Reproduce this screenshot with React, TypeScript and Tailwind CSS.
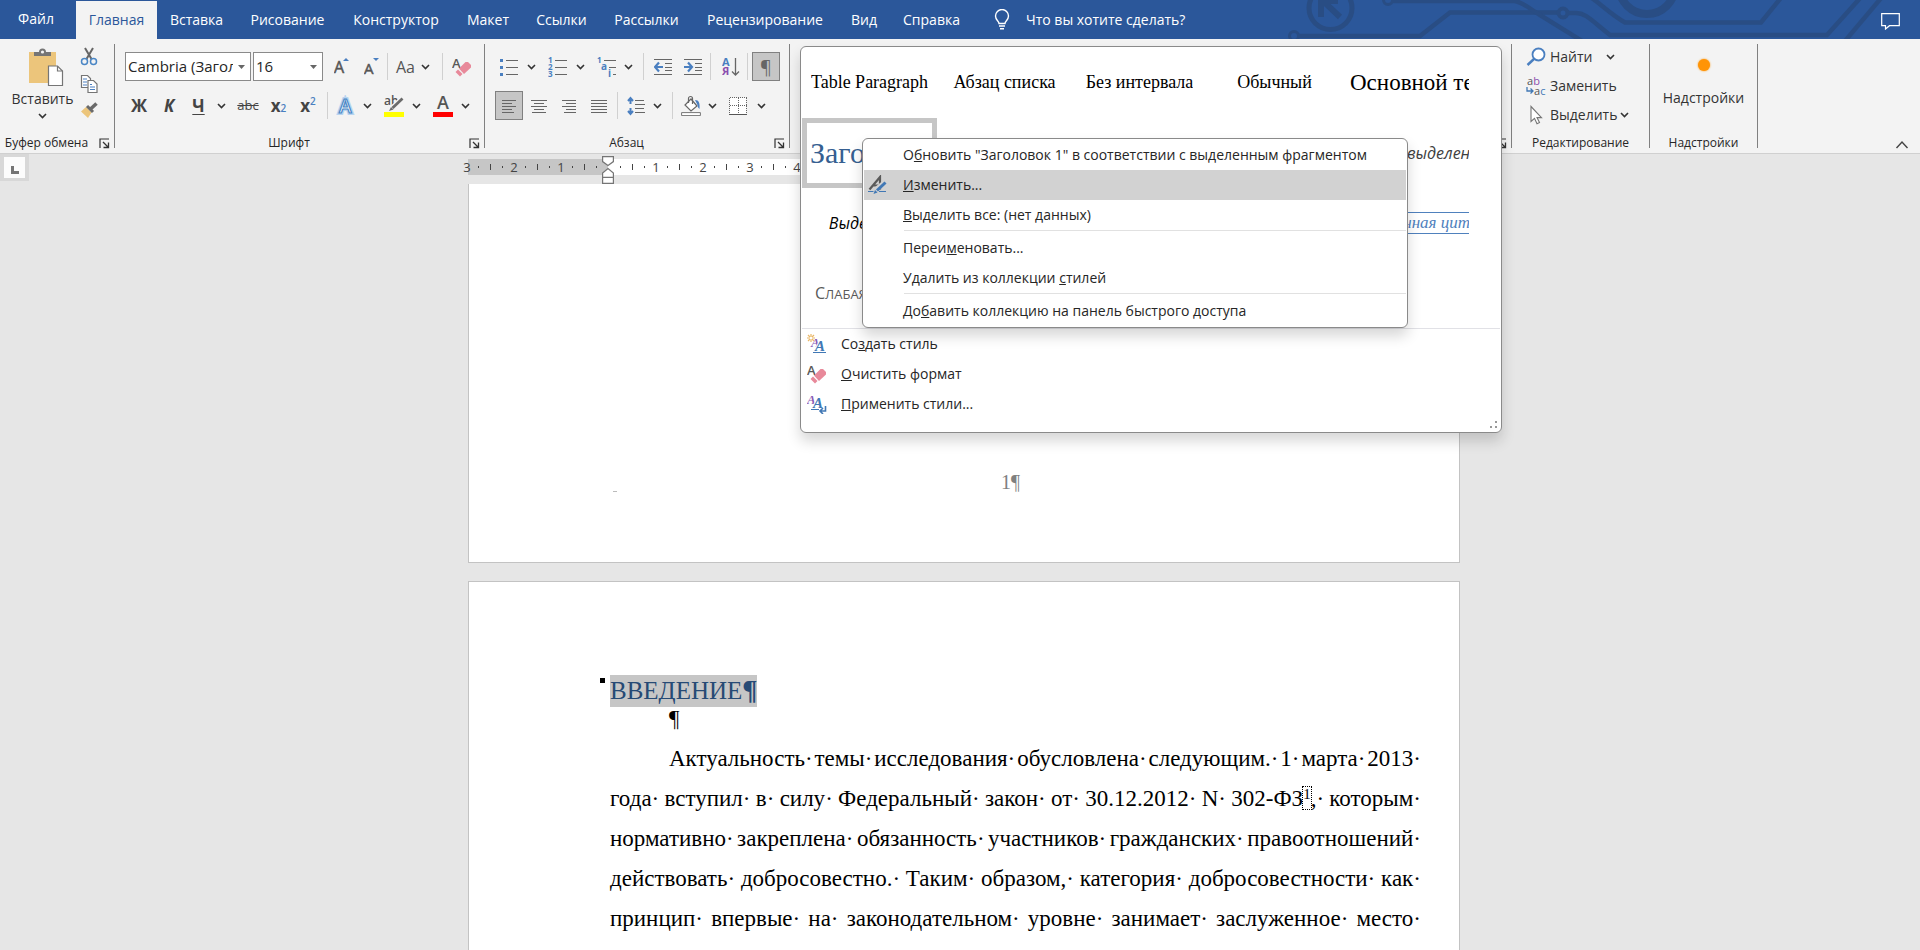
import React, { ReactNode } from "react";

const UI = "font-['Open_Sans','Noto_Sans',sans-serif]";

function Svg({ w, h, children, className = "" }: { w: number; h: number; children: ReactNode; className?: string }) {
  return (
    <svg width={w} height={h} viewBox={`0 0 ${w} ${h}`} fill="none" aria-hidden="true" className={`shrink-0 ${className}`}>
      {children}
    </svg>
  );
}

const Chevron = () => (
  <Svg w={9} h={6}>
    <path d="M1 1l3.5 3.5L8 1" stroke="#333" strokeWidth="1.6" />
  </Svg>
);

const Launcher = () => (
  <Svg w={11} h={11}>
    <path d="M1 10V1h9" stroke="#333" strokeWidth="1.2" />
    <path d="M4 4l5 5M9.5 4.5v5h-5" stroke="#333" strokeWidth="1.3" />
  </Svg>
);

function Tool({ label, width, className = "", children }: { label: string; width: string; className?: string; children: ReactNode }) {
  return (
    <button type="button" aria-label={label} className={`flex h-[29px] shrink-0 items-center justify-center ${width} ${className}`}>
      {children}
    </button>
  );
}

const Divider = ({ className = "" }: { className?: string }) => <span className={`h-[27px] w-px shrink-0 bg-[#d0d0d0] ${className}`} />;

function Group({ label, width, launcher, children }: { label: string; width: string; launcher?: boolean; children: ReactNode }) {
  return (
    <section aria-label={label} className={`relative flex shrink-0 ${width}`}>
      <div className="flex min-w-0 grow flex-col pt-[13px]">
        <div className="h-[83px]">{children}</div>
        <div className={`flex h-4 items-center ${launcher ? "pr-1" : "px-1"}`}>
          <span className={`grow whitespace-nowrap text-center text-xs leading-4 text-[#262626] ${launcher ? "pr-1.5" : ""}`}>{label}</span>
          {launcher && (
            <button type="button" aria-label={`${label}: параметры`}>
              <Launcher />
            </button>
          )}
        </div>
      </div>
      <span className="my-[5px] w-px bg-[#808080]" />
    </section>
  );
}

const tabs = [
  ["Вставка", "w-[79px]"],
  ["Рисование", "w-[103px]"],
  ["Конструктор", "w-[114px]"],
  ["Макет", "w-[70px]"],
  ["Ссылки", "w-[77px]"],
  ["Рассылки", "w-[93px]"],
  ["Рецензирование", "w-[144px]"],
  ["Вид", "w-[54px]"],
  ["Справка", "w-[81px]"],
];

function Header() {
  return (
    <header className="relative flex h-[39px] shrink-0 items-stretch overflow-hidden bg-[#2b579a] text-sm text-white">
      <svg width="640" height="39" viewBox="1280 0 640 39" fill="none" stroke="#294d84" strokeWidth="4.5" className="absolute right-0 top-0" aria-hidden="true">
        <circle cx="1330.500" cy="8" r="21.500" strokeWidth="5" />
        <path d="M1321 17V-2M1321 -1l19 18M1318 1h20" strokeWidth="6" />
        <circle cx="1294" cy="36" r="4.500" strokeWidth="3" />
        <path d="M1298 36h122l30-23.500h108" />
        <circle cx="1563" cy="13" r="4.500" strokeWidth="4" />
        <path d="M1568 13h8c10 0 16 8 34 22h217l35-39" />
        <circle cx="1388" cy="0" r="4.500" strokeWidth="3" />
        <path d="M1392 1h123c9 2 15 8 25 14l42 26" />
        <path d="M1590-3c10 6 20 17 35 25.500h136l21-26" />
        <path d="M1845 41l37-44" />
        <circle cx="1647" cy="-14" r="28" strokeWidth="8" />
      </svg>
      <nav className="relative flex pt-px">
        <button type="button" className="w-[76px] pr-1 pb-0.5">Файл</button>
        <button type="button" className="w-[81px] bg-[#f3f3f3] text-[#2b579a]">Главная</button>
        {tabs.map(([t, w]) => (
          <button key={t} type="button" className={w}>
            {t}
          </button>
        ))}
      </nav>
      <label className="relative ml-[22px] flex items-center gap-4">
        <Svg w={16} h={21}>
          <path d="M5 14.500C5 12 1.500 11 1.500 7a6.500 6.500 0 0113 0c0 4-3.500 5-3.500 7.500z M5 17h6M6 19.800h4" stroke="#fff" strokeWidth="1.400" />
        </Svg>
        <input aria-label="Помощник" placeholder="Что вы хотите сделать?" className="w-[190px] bg-transparent outline-none placeholder:text-white" />
      </label>
      <button type="button" aria-label="Примечания" className="relative ml-auto mr-5 mt-[2px]">
        <Svg w={19} h={18}>
          <path d="M.7 1.700h17.600v12H8.500L4.500 17v-3.300H.7z" stroke="#fff" strokeWidth="1.200" />
        </Svg>
      </button>
    </header>
  );
}

function Eraser() {
  return (
    <Svg w={20} h={20}>
      <text x="0" y="11" fontSize="13" fontWeight="600" fill="#595959" fontFamily="Open Sans">A</text>
      <path d="M3.500 15l2.500-2.500 4.500 4.500L8 19.500z" fill="#e8899a" />
      <path d="M7 11.500L13.500 5h2.500l3 3v2.500L12 17z" fill="#e8899a" />
    </Svg>
  );
}

function Clipboard() {
  return (
    <div className="flex pl-2">
      <button type="button" className="flex w-[69px] flex-col items-center text-sm leading-5 text-[#333]">
        <Svg w={36} h={38} className="-mt-1 ml-1.5">
          <path d="M1 4h27v31H1z" fill="#ecc57b" />
          <path d="M6 8V4h5a3 3 0 017 0h5v4z" fill="#757575" />
          <circle cx="14.500" cy="4" r="1.600" fill="#f3f3f3" />
          <path d="M20.500 18h9l5 5v14.500h-14z" fill="#fff" stroke="#757575" strokeWidth="1.200" />
          <path d="M29.500 18v5h5" stroke="#757575" strokeWidth="1.200" />
        </Svg>
        <span className="mt-[3px]">Вставить</span>
        <span className="mt-1">
          <Chevron />
        </span>
      </button>
      <div className="ml-[3px] -mt-[5px] flex flex-col gap-2">
        <button type="button" aria-label="Вырезать">
          <Svg w={18} h={19}>
            <path d="M5 1l6.500 11M13 1L6.500 12" stroke="#666" strokeWidth="2" />
            <circle cx="4.500" cy="14.500" r="3" stroke="#4a86c5" strokeWidth="1.500" />
            <circle cx="13.500" cy="14.500" r="3" stroke="#4a86c5" strokeWidth="1.500" />
          </Svg>
        </button>
        <button type="button" aria-label="Копировать">
          <Svg w={18} h={19}>
            <path d="M1.500 1.500h6l3 3v9h-9z" fill="#fff" stroke="#757575" strokeWidth="1.200" />
            <path d="M3 5h4M3 8h4M3 11h4" stroke="#4a7fc0" />
            <path d="M8 6.500h5.500l3.500 3.500v8.500H8z" fill="#fff" stroke="#757575" strokeWidth="1.200" />
            <path d="M10 10.500h2M10 13h5M10 15.500h5" stroke="#4a7fc0" />
          </Svg>
        </button>
        <button type="button" aria-label="Формат по образцу">
          <Svg w={18} h={18}>
            <path d="M6 6l5.500 5.500L8 17 1 10.500z" fill="#ecc57b" />
            <path d="M7 5l6 6" stroke="#6a6a6a" strokeWidth="3" />
            <path d="M10.500 8L16.500 2.500" stroke="#6a6a6a" strokeWidth="3.500" />
          </Svg>
        </button>
      </div>
    </div>
  );
}

function Combo({ label, value, width }: { label: string; value: string; width: string }) {
  return (
    <div className={`flex h-[29px] items-center border border-[#8a8a8a] bg-white pl-0.5 ${width}`}>
      <input aria-label={label} defaultValue={value} className="min-w-0 grow bg-transparent text-[15px] text-[#262626] outline-none" />
      <button type="button" aria-label={`${label}: список`} className="flex w-[17px] shrink-0 items-center justify-center">
        <Svg w={7} h={4}>
          <path d="M0 0h7L3.500 4z" fill="#666" />
        </Svg>
      </button>
    </div>
  );
}

function FontTools() {
  return (
    <div className="flex flex-col gap-[10px] pl-2">
      <div className="flex items-center pl-0.5">
        <Combo label="Шрифт" value="Cambria (Заголовки)" width="w-[126px]" />
        <Combo label="Размер шрифта" value="16" width="ml-0.5 w-[70px]" />
        <Tool label="Увеличить размер" width="ml-1 w-[30px]">
          <Svg w={16} h={22}>
            <text x="0" y="17" fontSize="16" fill="#555" stroke="#555" strokeWidth=".5" fontFamily="Open Sans">A</text>
            <path d="M9 5l3-3 3 3z" fill="#4a7fc0" />
          </Svg>
        </Tool>
        <Tool label="Уменьшить размер" width="w-[29px]">
          <Svg w={16} h={22}>
            <text x="0" y="18" fontSize="15" fill="#555" stroke="#555" strokeWidth=".5" fontFamily="Open Sans">A</text>
            <path d="M9 2l3 3 3-3z" fill="#4a7fc0" />
          </Svg>
        </Tool>
        <Divider className="ml-px" />
        <Tool label="Регистр" width="w-[50px]" className="gap-1.5 text-base text-[#555]">
          Aa
          <Chevron />
        </Tool>
        <Divider className="ml-1" />
        <Tool label="Очистить формат" width="ml-1 w-[30px]">
          <Eraser />
        </Tool>
      </div>
      <div className="flex items-center text-[17px] font-bold text-[#444]">
        <Tool label="Полужирный" width="w-8">Ж</Tool>
        <Tool label="Курсив" width="w-7" className="italic">К</Tool>
        <Tool label="Подчеркнутый" width="w-[31px]" className="underline underline-offset-2">Ч</Tool>
        <Tool label="Вид подчеркивания" width="w-[14px]">
          <Chevron />
        </Tool>
        <Tool label="Зачеркнутый" width="ml-1 w-8" className="text-[13px] font-normal line-through">abc</Tool>
        <Tool label="Подстрочный" width="w-[29px]">
          <span>x</span>
          <sub className="text-[10px] font-semibold text-[#4a7fc0]">2</sub>
        </Tool>
        <Tool label="Надстрочный" width="w-[30px]">
          <span>x</span>
          <sup className="text-[10px] font-semibold text-[#4a7fc0]">2</sup>
        </Tool>
        <Divider className="ml-1" />
        <Tool label="Эффекты текста" width="ml-1 w-7">
          <Svg w={20} h={22}>
            <text x="3" y="18" fontSize="19" fontWeight="600" fill="#fff" stroke="#b8d4f0" strokeWidth="4" fontFamily="Open Sans">A</text>
            <text x="3" y="18" fontSize="19" fontWeight="600" fill="#fff" stroke="#4a86c5" strokeWidth="1.200" fontFamily="Open Sans">A</text>
          </Svg>
        </Tool>
        <Tool label="Варианты эффектов" width="w-[14px]">
          <Chevron />
        </Tool>
        <Tool label="Цвет выделения" width="ml-[6px] w-7">
          <Svg w={20} h={22}>
            <text x="0" y="10" fontSize="12" fontWeight="600" fill="#555" fontFamily="Open Sans">ab</text>
            <path d="M8 13L18 3.500" stroke="#f3f3f3" strokeWidth="5" />
            <path d="M8.500 13L18.500 3.500" stroke="#6a6a6a" strokeWidth="2.800" />
            <path d="M5 16l2-4 2.500 2.500z" fill="#6a6a6a" />
            <path d="M0 17h20v5H0z" fill="#ff0" />
          </Svg>
        </Tool>
        <Tool label="Варианты выделения" width="w-[16px]">
          <Chevron />
        </Tool>
        <Tool label="Цвет текста" width="ml-[5px] w-7">
          <Svg w={20} h={22}>
            <text x="4" y="14" fontSize="18" fontWeight="600" fill="#555" fontFamily="Open Sans">A</text>
            <path d="M0 17h20v5H0z" fill="#f00" />
          </Svg>
        </Tool>
        <Tool label="Варианты цвета" width="w-[16px]">
          <Chevron />
        </Tool>
      </div>
    </div>
  );
}

function Lines({ d, w = 18 }: { d: string; w?: number }) {
  return (
    <Svg w={w} h={14}>
      <path d={d} stroke="#666" strokeWidth="1" />
    </Svg>
  );
}

function ParagraphTools() {
  const num = { fontSize: 8, fontWeight: 700, fill: "#4a7fc0", fontFamily: "Open Sans" };
  return (
    <div className="flex flex-col gap-[10px] pl-[10px]">
      <div className="flex items-center">
        <Tool label="Маркеры" width="w-[27px]">
          <Svg w={18} h={18}>
            <path d="M6 2.500h12M6 9.500h12M6 16.500h12" stroke="#666" />
            <path d="M0 1h3v3H0zM0 8h3v3H0zM0 15h3v3H0z" fill="#4a7fc0" />
          </Svg>
        </Tool>
        <Tool label="Вид маркеров" width="w-[14px] ml-[2px]"><Chevron /></Tool>
        <Tool label="Нумерация" width="ml-[5px] w-[28px]">
          <Svg w={19} h={20}>
            <path d="M7 3.500h12M7 10.500h12M7 17.500h12" stroke="#666" />
            <text x="0" y="6" {...num}>1</text>
            <text x="0" y="13" {...num}>2</text>
            <text x="0" y="20" {...num}>3</text>
          </Svg>
        </Tool>
        <Tool label="Вид нумерации" width="ml-[2px] w-[14px]"><Chevron /></Tool>
        <Tool label="Многоуровневый список" width="ml-[5px] w-[29px]">
          <Svg w={20} h={20}>
            <path d="M7 3.500h12M12 10.500h7M16 17.500h3" stroke="#666" />
            <text x="0" y="6" {...num}>1</text>
            <text x="4" y="13" {...num} fontSize={10}>a</text>
            <text x="11" y="20" {...num} fontSize={10}>i</text>
          </Svg>
        </Tool>
        <Tool label="Вид списка" width="w-[14px]"><Chevron /></Tool>
        <Divider className="ml-2" />
        <Tool label="Уменьшить отступ" width="ml-1 w-[30px]">
          <Svg w={19} h={18}>
            <path d="M0 1.500h18M11 5.500h7M11 9.500h7M11 12.500h7M0 16.500h18" stroke="#666" />
            <path d="M9 9H2M5 4.500L1 9l4 4.500" stroke="#4a7fc0" strokeWidth="2.200" />
          </Svg>
        </Tool>
        <Tool label="Увеличить отступ" width="w-[30px]">
          <Svg w={19} h={18}>
            <path d="M0 1.500h18M11 5.500h7M11 9.500h7M11 12.500h7M0 16.500h18" stroke="#666" />
            <path d="M0 9h7M4 4.500L8 9l-4 4.500" stroke="#4a7fc0" strokeWidth="2.200" />
          </Svg>
        </Tool>
        <Divider className="ml-0.5" />
        <Tool label="Сортировка" width="ml-1 w-[31px]">
          <Svg w={18} h={22}>
            <text x="0" y="10" fontSize="11" fontWeight="700" fill="#4a7fc0" fontFamily="Open Sans">А</text>
            <text x="0" y="19" fontSize="11" fontWeight="700" fill="#8a4fae" fontFamily="Open Sans">Я</text>
            <path d="M13.500 2v17M10 15.500l3.500 3.500 3.500-3.500" stroke="#666" strokeWidth="1.300" />
          </Svg>
        </Tool>
        <Divider className="ml-px" />
        <Tool label="Отобразить все знаки" width="ml-1 w-[28px]" className="border border-[#808080] bg-[#c6c6c6] text-lg text-[#666]">
          ¶
        </Tool>
      </div>
      <div className="flex items-center">
        <Tool label="По левому краю" width="w-[28px]" className="border border-[#808080] bg-[#c6c6c6]">
          <Lines w={16} d="M1 1.500h14M1 4.500h10M1 7.500h14M1 10.500h10M1 13.500h12" />
        </Tool>
        <Tool label="По центру" width="ml-[2px] w-[28px]">
          <Lines w={16} d="M0 1.500h16M3 4.500h10M0 7.500h16M3 10.500h10M1 13.500h14" />
        </Tool>
        <Tool label="По правому краю" width="ml-[2px] w-[28px]">
          <Lines w={16} d="M1 1.500h14M5 4.500h10M1 7.500h14M5 10.500h10M3 13.500h12" />
        </Tool>
        <Tool label="По ширине" width="ml-[2px] w-[28px]">
          <Lines w={16} d="M0 1.500h16M0 4.500h16M0 7.500h16M0 10.500h16M0 13.500h16" />
        </Tool>
        <Divider className="ml-1" />
        <Tool label="Интервал" width="ml-1 w-[28px]">
          <Svg w={18} h={20}>
            <path d="M8 4.500h9M8 8.500h10M8 12.500h9M8 16.500h10" stroke="#666" />
            <path d="M3.500 8V2M1 5l2.500-3L6 5M3.500 12v6M1 15l2.500 3L6 15" stroke="#4a7fc0" strokeWidth="2" />
          </Svg>
        </Tool>
        <Tool label="Варианты интервала" width="w-[14px]"><Chevron /></Tool>
        <Divider className="ml-2" />
        <Tool label="Заливка" width="ml-[3px] w-[29px]">
          <Svg w={20} h={21}>
            <path d="M10 4l6 7-6 5-6-6z" fill="#fff" stroke="#666" strokeWidth="1.200" />
            <path d="M7.500 8V3.500a2 2 0 014 0V9" stroke="#666" strokeWidth="1.200" />
            <path d="M14 5c4 0 5 3 4.500 9-1-1-2-2-2-4z" fill="#4a7fc0" />
            <path d="M.6 17.600h18.800v3H.6z" fill="#fff" stroke="#757575" />
          </Svg>
        </Tool>
        <Tool label="Варианты заливки" width="w-[14px]"><Chevron /></Tool>
        <Tool label="Границы" width="ml-[5px] w-[28px]">
          <Svg w={18} h={18}>
            <path d="M1 1h16v16H1z" fill="#fff" />
            <path d="M1 .5h17M1 8.500h17M.5 1v16M9.500 1v16M17.500 1v16" stroke="#666" strokeDasharray="1 1" />
            <path d="M0 17.500h18" stroke="#555" />
          </Svg>
        </Tool>
        <Tool label="Варианты границ" width="ml-[2px] w-[14px]"><Chevron /></Tool>
      </div>
    </div>
  );
}

const serif = "font-['Liberation_Serif',serif]";

const styles: { name: string; look: string; text?: string }[] = [
  { name: "Table Paragraph", look: `justify-center text-[18px] text-black ${serif}` },
  { name: "Абзац списка", look: `justify-center text-[18px] text-black ${serif}` },
  { name: "Без интервала", look: `justify-center text-[18px] text-black ${serif}` },
  { name: "Обычный", look: `justify-center text-[18px] text-black ${serif}` },
  { name: "Основной текст", look: `text-[23px] text-black ${serif}` },
  { name: "Заголовок 1", look: `text-[30px] text-[#365f91] border-[5px] border-[#c6c6c6] px-[3px] ${serif}` },
  { name: "", look: "" },
  { name: "", look: "" },
  { name: "", look: "" },
  { name: "Слабое выделение", look: "text-[16px] italic text-[#404040]" },
  { name: "Выделение", look: "justify-center text-[16px] italic text-black" },
  { name: "", look: "" },
  { name: "", look: "" },
  { name: "", look: "" },
  { name: "Выделенная цитата", look: `text-[17px] italic text-[#4f81bd] ${serif}`, text: "border-y border-[#4f81bd] leading-5" },
  { name: "Слабая ссылка", look: "pl-[13px] text-[#5a5a5a]", text: "text-[13px] uppercase first-letter:text-[16px]" },
];

const commands: { text: ReactNode; icon: ReactNode }[] = [
  {
    text: <>Со<u>з</u>дать стиль</>,
    icon: (
      <Svg w={20} h={20}>
        <path d="M4 0v8M0 4h8M1 1l6 6M7 1L1 7" stroke="#eab766" strokeWidth="1.200" />
        <circle cx="4" cy="4" r="1.500" fill="#fff" />
        <text x="4" y="13" fontSize="13" fontStyle="italic" fontWeight="700" fill="#8a5bb5" fontFamily="Liberation Serif">A</text>
        <text x="8" y="17" fontSize="15" fontStyle="italic" fontWeight="700" fill="#4178b5" stroke="#fff" strokeWidth="2" paintOrder="stroke" fontFamily="Liberation Serif">A</text>
        <path d="M6 18.500h13" stroke="#4178b5" />
      </Svg>
    ),
  },
  { text: <><u>О</u>чистить формат</>, icon: <Eraser /> },
  {
    text: <><u>П</u>рименить стили...</>,
    icon: (
      <Svg w={20} h={20}>
        <text x="0" y="10" fontSize="13" fontStyle="italic" fontWeight="700" fill="#8a5bb5" fontFamily="Liberation Serif">A</text>
        <text x="6" y="14" fontSize="15" fontStyle="italic" fontWeight="700" fill="#4178b5" stroke="#fff" strokeWidth="2" paintOrder="stroke" fontFamily="Liberation Serif">A</text>
        <path d="M4 15.500h8" stroke="#4178b5" />
        <path d="M18.500 12v5h-5M16 14l-3 3 3 3" stroke="#4178b5" strokeWidth="1.600" />
      </Svg>
    ),
  },
];

function MenuRow({ children, icon, active }: { children: ReactNode; icon?: ReactNode; active?: boolean }) {
  return (
    <button type="button" role="menuitem" className={`flex h-[30px] w-full items-center text-left ${active ? "bg-[#d2d2d2]" : ""}`}>
      <span className="flex w-[39px] shrink-0 items-center pl-1">{icon}</span>
      <span className="whitespace-nowrap">{children}</span>
    </button>
  );
}

const MenuSeparator = () => <div role="separator" className="mb-0.5 ml-10 h-px bg-[#e1e1e1]" />;

function ContextMenu() {
  return (
    <div role="menu" className="absolute left-[61px] top-[91px] z-10 w-[546px] rounded-md border border-[#8a8a8a] bg-white p-px shadow-[0_8px_14px_rgba(0,0,0,0.16)]">
      <MenuRow>О<u>б</u>новить "Заголовок 1" в соответствии с выделенным фрагментом</MenuRow>
      <MenuRow
        active
        icon={
          <Svg w={20} h={20}>
            <path d="M1.500 14.500L12 2v12.500M5 10.500h6" stroke="#5a5a5a" strokeWidth="2.200" />
            <path d="M7 18l2-4.500 8.500-7" stroke="#d2d2d2" strokeWidth="4.500" />
            <path d="M9 15.500l8.500-8" stroke="#4178b5" strokeWidth="3" />
            <path d="M5.500 19l1.500-4 2.500 2.500z" fill="#4178b5" />
            <path d="M0 16.500h5.500M11 16.500h7" stroke="#4178b5" />
          </Svg>
        }
      >
        <u>И</u>зменить...
      </MenuRow>
      <MenuRow><u>В</u>ыделить все: (нет данных)</MenuRow>
      <MenuSeparator />
      <MenuRow>Переи<u>м</u>еновать...</MenuRow>
      <MenuRow>Удалить из коллекции <u>с</u>тилей</MenuRow>
      <MenuSeparator />
      <MenuRow>До<u>б</u>авить коллекцию на панель быстрого доступа</MenuRow>
    </div>
  );
}

function StyleGallery() {
  return (
    <div className="absolute left-[10px] top-[7px] z-20 w-[702px] rounded-md border border-[#8a8a8a] bg-white pt-px pb-[13px] text-sm text-[#262626] shadow-[0_8px_14px_rgba(0,0,0,0.16)]">
      <div className="grid grid-cols-[repeat(5,135px)] pl-px">
        {styles.map((s, i) =>
          s.name ? (
            <button key={i} type="button" className={`flex h-[70px] items-center px-2 ${s.look}`}>
              <span className={`overflow-hidden whitespace-nowrap ${s.text ?? ""}`}>{s.name}</span>
            </button>
          ) : (
            <span key={i} className="h-[70px]" />
          ),
        )}
      </div>
      <div className="mx-px border-t border-[#e1e1e6]">
        {commands.map((c, i) => (
          <button key={i} type="button" className="flex h-[30px] w-full items-center pl-[5px] text-left">
            <span className="w-[34px]">{c.icon}</span>
            <span>{c.text}</span>
          </button>
        ))}
      </div>
      <Svg w={8} h={8} className="absolute bottom-[3px] right-[4px]">
        <path d="M6 0h2v2H6zM6 5h2v2H6zM1 5h2v2H1z" fill="#999" />
      </Svg>
      <ContextMenu />
    </div>
  );
}

function Editing() {
  return (
    <div className="-mt-[10px] flex flex-col pl-[14px] text-sm text-[#333]">
      <button type="button" className="flex h-[29px] items-center">
        <Svg w={20} h={20}>
          <circle cx="12.500" cy="7.500" r="6" fill="#fff" stroke="#4a7fc0" strokeWidth="1.800" />
          <path d="M8.500 11.500L1.500 18" stroke="#4a7fc0" strokeWidth="2.400" />
        </Svg>
        <span className="ml-1 mr-[13px]">Найти</span>
        <Chevron />
      </button>
      <button type="button" className="flex h-[29px] items-center">
        <Svg w={20} h={20}>
          <text x="1" y="9" fontSize="11" fill="#555" fontFamily="Open Sans">a<tspan fill="#8a4fae">b</tspan></text>
          <text x="8" y="19" fontSize="11" fill="#555" fontFamily="Open Sans">a<tspan fill="#4178b5">c</tspan></text>
          <path d="M1 11v4h6M4.500 12.500L7 15l-2.500 2.500" stroke="#4178b5" strokeWidth="1.300" />
        </Svg>
        <span className="ml-1">Заменить</span>
      </button>
      <button type="button" className="flex h-[29px] items-center">
        <Svg w={20} h={20}>
          <path d="M5 1.500v15l3.500-3.200 2.500 5.500 2.500-1.200-2.500-5h4.500z" fill="#fff" stroke="#757575" strokeWidth="1.100" />
        </Svg>
        <span className="ml-1 mr-[3px]">Выделить</span>
        <Chevron />
      </button>
    </div>
  );
}

function Ribbon() {
  return (
    <div className="relative flex h-[115px] shrink-0 border-b border-[#d0d0d0] bg-[#f3f3f3]">
      <Group label="Буфер обмена" width="w-[115px]" launcher><Clipboard /></Group>
      <Group label="Шрифт" width="w-[370px]" launcher><FontTools /></Group>
      <Group label="Абзац" width="w-[305px]" launcher><ParagraphTools /></Group>
      <Group label="Стили" width="w-[722px]" launcher><StyleGallery /></Group>
      <Group label="Редактирование" width="w-[138px]"><Editing /></Group>
      <Group label="Надстройки" width="w-[108px]">
        <button type="button" className="flex w-full flex-col items-center pt-[7px] text-sm leading-5 text-[#333]">
          <span className="size-3 rounded-full bg-[#ff9406] shadow-[0_0_2px_#ff9406]" />
          <span className="mt-[17px]">Надстройки</span>
        </button>
      </Group>
      <button type="button" aria-label="Свернуть ленту" className="mb-1 ml-auto mr-[11px] self-end">
        <Svg w={14} h={9}>
          <path d="M1.500 8L7 2l5.500 6" stroke="#444" strokeWidth="1.400" />
        </Svg>
      </button>
    </div>
  );
}

function RulerUnit({ n }: { n: string }) {
  return (
    <div className="grid w-[47px] shrink-0 grid-cols-4 items-center justify-items-center">
      <span>{n}</span>
      <span className="h-0.5 w-px bg-[#444]" />
      <span className="h-1.5 w-px bg-[#444]" />
      <span className="h-0.5 w-px bg-[#444]" />
    </div>
  );
}

function Ruler() {
  return (
    <div className="flex h-[30px] shrink-0">
      <div className="h-[27px] w-[29px] shrink-0 bg-[#d8d8d8] px-1 py-[3px]">
        <button type="button" aria-label="Табуляция" className="flex h-[21px] w-[21px] items-center justify-center bg-[#fcfcfc]">
          <Svg w={8} h={8} className="mt-1">
            <path d="M1.500 0v6.500H8" stroke="#757575" strokeWidth="3" />
          </Svg>
        </button>
      </div>
      <div className="-ml-[21px] grow pt-[5px]">
        <div className="mx-auto flex h-4 w-full max-w-[992px] text-[13px] leading-4 text-[#444]">
          <div className="flex w-[140px] shrink-0 bg-[#c6c6c6]">
            <div className="-ml-[7px] flex">
              {["3", "2", "1"].map((n) => <RulerUnit key={n} n={n} />)}
            </div>
          </div>
          <div className="relative flex min-w-0 grow bg-white">
            <div className="-ml-[5px] flex">
              {["", "1", "2", "3", "4"].map((n) => <RulerUnit key={n} n={n} />)}
            </div>
            <Svg w={12} h={28} className="absolute -left-1.5 -top-[3px]">
              <path d="M.6.6h10.800v5L6 9.500.6 5.600zM.6 21.400V17L6 12.500l5.400 4.500v10.400H.6zM.6 21.400h10.800" fill="#fff" stroke="#757575" strokeWidth="1.200" />
            </Svg>
          </div>
        </div>
      </div>
    </div>
  );
}

const bodyLines: string[][] = [
  ["Актуальность", "темы", "исследования", "обусловлена", "следующим.", "1", "марта", "2013"],
  ["года", "вступил", "в", "силу", "Федеральный", "закон", "от", "30.12.2012", "N", "302-ФЗ|1|,", "которым"],
  ["нормативно", "закреплена", "обязанность", "участников", "гражданских", "правоотношений"],
  ["действовать", "добросовестно.", "Таким", "образом,", "категория", "добросовестности", "как"],
  ["принцип", "впервые", "на", "законодательном", "уровне", "занимает", "заслуженное", "место"],
];

function Word({ text }: { text: string }) {
  const [before, note, after] = text.split("|");
  return (
    <span>
      {before}
      {note && <sup className="-top-[7px] inline-block h-[22px] text-[15px] leading-[14px] outline-1 outline-dotted outline-black">{note}</sup>}
      {after}·
    </span>
  );
}

function Document() {
  return (
    <main className={`flex min-h-0 grow flex-col gap-[18px] overflow-hidden pl-2 ${serif}`}>
      <article className="mx-auto h-[379px] w-full max-w-[992px] shrink-0 border border-t-0 border-[#c3c3c3] bg-white pt-[284px]">
        <p className="flex pl-[144px] pr-[439px] text-[20px] leading-7 text-[#808080]">
          <span className="mb-1 h-px w-1 self-end bg-[#bbb]" />
          <span className="ml-auto">1¶</span>
        </p>
      </article>
      <article className="mx-auto w-full max-w-[992px] grow border border-b-0 border-[#c3c3c3] bg-white pl-[141px] pr-[38px] pt-[93px]">
        <h1 className="-ml-[10px] flex h-8 text-[25px] leading-8 text-[#264a75]">
          <span className="mr-[5px] mt-[3px] size-[5px] bg-black" />
          <span className="h-8 bg-[#c6c6c6]">ВВЕДЕНИЕ<b className="text-[28px] leading-none">¶</b></span>
        </h1>
        <p className="mb-2 pl-[59px] text-[23px] leading-6 text-black">¶</p>
        <div className="text-[23px] leading-10 text-black">
          {bodyLines.map((line, i) => (
            <p key={i} className={`flex h-10 justify-between whitespace-nowrap ${i === 0 ? "pl-[59px]" : ""}`}>
              {line.map((w, j) => (
                <Word key={j} text={w} />
              ))}
            </p>
          ))}
        </div>
      </article>
    </main>
  );
}

export default function App() {
  return (
    <div className={`flex h-screen flex-col overflow-hidden bg-[#e6e6e6] ${UI}`}>
      <Header />
      <Ribbon />
      <Ruler />
      <Document />
    </div>
  );
}
